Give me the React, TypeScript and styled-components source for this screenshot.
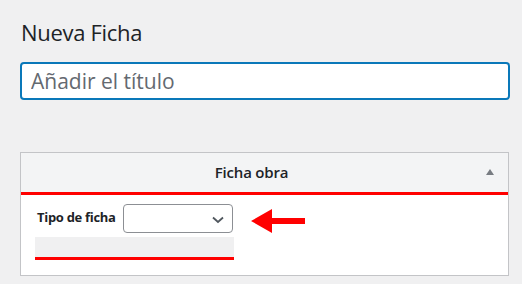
import React from "react";
import styled, { createGlobalStyle } from "styled-components";

const Global = createGlobalStyle`
  html, body { margin: 0; padding: 0; background: #f0f0f1; }
  body { font-family: "Open Sans", "Noto Sans", sans-serif; color: #1d2327; }
  * { box-sizing: border-box; }
`;

const Page = styled.div`
  padding: 17px 12px 0 20px;
`;

const Heading = styled.h1`
  margin: 0 0 15px 1px;
  font-size: 22px;
  font-weight: 400;
  line-height: 30px;
  letter-spacing: -0.3px;
  color: #1d2327;
`;

const TitleInput = styled.input`
  display: block;
  width: 100%;
  height: 38px;
  margin: 0;
  padding: 0 9px;
  border: 2px solid #0a78b9;
  border-radius: 4px;
  background: #fff;
  font-family: inherit;
  font-size: 21px;
  outline: none;
  &::placeholder { color: #646970; }
`;

const Postbox = styled.div`
  margin-top: 52px;
  width: 489px;
  background: #fff;
  border: 1px solid #c3c4c7;
`;

const PostboxHeader = styled.div`
  height: 42px;
  display: flex;
  align-items: center;
  background: #f3f4f5;
  border-bottom: 3px solid #ff0000;
`;

const PostboxTitle = styled.h2`
  flex: 1;
  margin: 0;
  text-align: center;
  font-size: 15px;
  font-weight: 600;
  letter-spacing: -0.2px;
  line-height: 1;
  color: #1d2327;
`;

const HandleActions = styled.div`
  width: 26px;
  height: 100%;
  display: flex;
  justify-content: flex-start;
  padding: 16px 0 0 4px;
`;

const Toggle = styled.span`
  width: 0;
  height: 0;
  border-left: 4px solid transparent;
  border-right: 4px solid transparent;
  border-bottom: 6px solid #787c82;
`;

const PostboxBody = styled.div`
  position: relative;
  padding: 9px 0 15px 14px;
`;

const Field = styled.div`
  width: 199px;
`;

const FieldRow = styled.div`
  display: flex;
  align-items: center;
  gap: 7px;
  padding-left: 2px;
`;

const Label = styled.label`
  font-size: 13px;
  font-weight: 700;
  letter-spacing: -0.3px;
  color: #1d2327;
  transform: translateY(-2px);
`;

const SelectBox = styled.div`
  position: relative;
  width: 110px;
  height: 29px;
  border: 1px solid #8c8f94;
  border-radius: 4px;
  background: #fff;
`;

const Chevron = styled.svg`
  position: absolute;
  right: 8px;
  top: 11px;
`;

const FieldBar = styled.div`
  margin-top: 4px;
  height: 23px;
  background: #f0f0f1;
  border-bottom: 3px solid #ff0000;
`;

const Arrow = styled.svg`
  position: absolute;
  left: 230px;
  top: 14px;
`;

export default function App() {
  return (
    <>
      <Global />
      <Page>
        <Heading>Nueva Ficha</Heading>
        <TitleInput placeholder="Añadir el título" />
        <Postbox>
          <PostboxHeader>
            <PostboxTitle>Ficha obra</PostboxTitle>
            <HandleActions>
              <Toggle />
            </HandleActions>
          </PostboxHeader>
          <PostboxBody>
            <Field>
              <FieldRow>
                <Label>Tipo de ficha</Label>
                <SelectBox>
                  <Chevron width="12" height="8" viewBox="0 0 12 8">
                    <path d="M1 1.5 L6 6 L11 1.5" fill="none" stroke="#50575e" strokeWidth="1.8" />
                  </Chevron>
                </SelectBox>
              </FieldRow>
              <FieldBar />
            </Field>
            <Arrow width="56" height="26" viewBox="0 0 56 26">
              <polygon points="0,12 21,0 21,9 54,9 54,15 21,15 21,24" fill="#ff0000" />
            </Arrow>
          </PostboxBody>
        </Postbox>
      </Page>
    </>
  );
}
